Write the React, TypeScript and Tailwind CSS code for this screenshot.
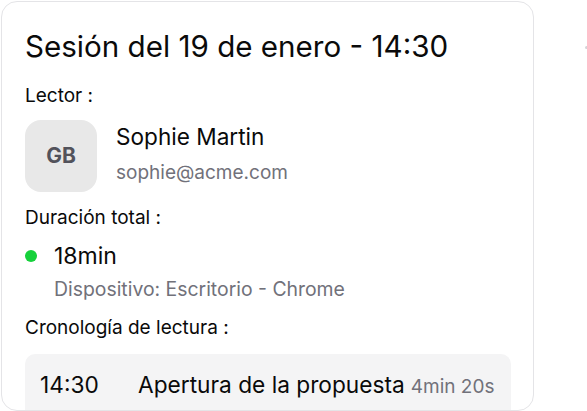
import React from "react";

export default function App() {
  return (
    <div className="relative w-[587px] h-[411px] overflow-hidden bg-white font-['Inter',sans-serif] text-[#0a0a0a]">
      <div className="ml-[1px] mt-[1px] w-[533px] h-[410px] rounded-[16px] border border-[#e4e4e7] bg-white pl-[23px] pt-[26px] overflow-hidden">
        <h1 className="text-[29.6px] leading-[36px] font-normal">
          Sesión del 19 de enero - 14:30
        </h1>

        <p className="mt-[20px] text-[19px] leading-[24px]">Lector :</p>
        <div className="mt-[12px] flex items-start gap-[19px]">
          <div className="w-[72px] h-[72px] rounded-[16px] bg-[#e8e8e8] flex items-center justify-center text-[21px] font-bold text-[#52525b]">
            GB
          </div>
          <div className="mt-[3px] flex flex-col">
            <span className="text-[22.6px] leading-[28px]">Sophie Martin</span>
            <span className="mt-[10px] text-[19px] leading-[24px] text-[#71717a]">sophie@acme.com</span>
          </div>
        </div>

        <p className="mt-[14px] text-[19px] leading-[24px]">Duración total :</p>
        <div className="mt-[12px] flex items-center gap-[17px]">
          <span className="w-[12px] h-[12px] rounded-full bg-[#16d13b]" />
          <span className="text-[23px] leading-[28px]">18min</span>
        </div>
        <p className="mt-[7px] ml-[29px] text-[19.4px] leading-[24px] text-[#71717a]">
          Dispositivo: Escritorio - Chrome
        </p>

        <p className="mt-[15px] text-[19px] leading-[24px]">Cronología de lectura :</p>
        <div className="mt-[14px] w-[486px] rounded-[10px] bg-[#f4f4f5] pl-[15px] pt-[17px] pb-[20px] flex items-baseline">
          <span className="w-[98px] text-[22.7px] leading-[28px]">14:30</span>
          <span className="text-[22.7px] leading-[28px]">Apertura de la propuesta</span>
          <span className="ml-[6px] text-[19px] leading-[28px] text-[#71717a]">4min 20s</span>
        </div>
      </div>
      <span className="absolute left-[585px] top-[46px] w-[3px] h-[3px] rounded-full bg-[#d4d4d8]" />
    </div>
  );
}
